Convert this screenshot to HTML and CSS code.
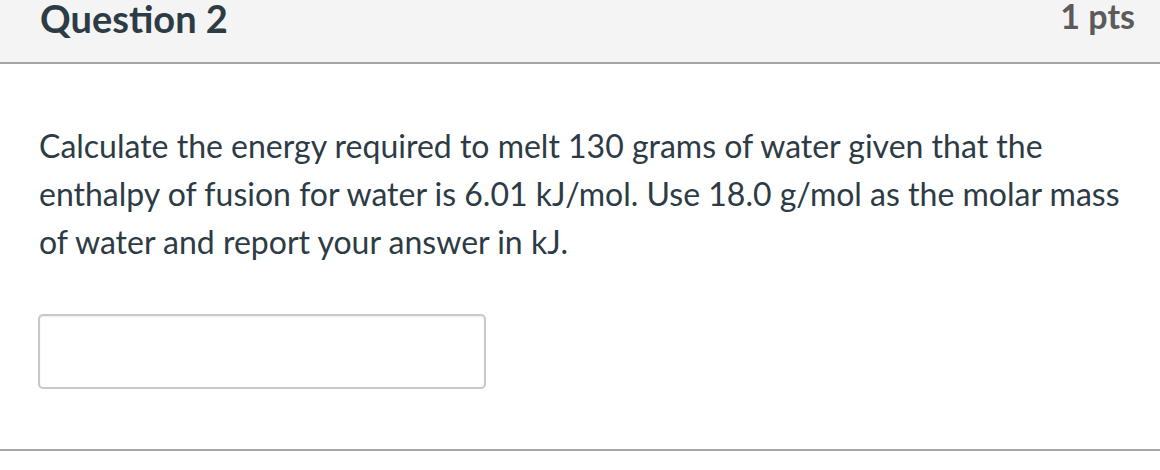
FILE: index.html
```html
<!DOCTYPE html>
<html>
<head>
<meta charset="utf-8">
<link rel="stylesheet" href="styles.css">
</head>
<body>
<div class="question">
  <div class="header">
    <span class="title">Question 2</span>
    <span class="points">1 pts</span>
  </div>
  <div class="content">
    <p class="text">Calculate the energy required to melt 130 grams of water given that the enthalpy of fusion for water is 6.01 kJ/mol. Use 18.0 g/mol as the molar mass of water and report your answer in kJ.</p>
    <input class="answer" type="text">
  </div>
</div>
</body>
</html>
```
FILE: styles.css
```css
html, body {
  margin: 0;
  padding: 0;
  background: #fff;
}
body {
  font-family: Lato, "Liberation Sans", sans-serif;
  color: #2d3b45;
}
.question {
  width: 1160px;
  border-bottom: 2px solid #a5a5a5;
}
.header {
  height: 62px;
  background: #f4f4f4;
  border-bottom: 2px solid #a5a5a5;
  display: flex;
  justify-content: space-between;
  align-items: flex-start;
  padding: 0 25px 0 40px;
  box-sizing: content-box;
}
.title {
  font-weight: 700;
  font-size: 38px;
  line-height: 36px;
}
.points {
  font-weight: 700;
  font-size: 34px;
  line-height: 32px;
  color: #5b5b5b;
}
.content {
  padding: 58px 40px 60px 39px;
}
.text {
  margin: 0;
  font-size: 32px;
  line-height: 48px;
}
.answer {
  display: block;
  margin-top: 48px;
  width: 448px;
  height: 75px;
  box-sizing: border-box;
  border: 2px solid #c9c9c9;
  border-radius: 5px;
  box-shadow: inset 0 1px 2px rgba(0,0,0,0.08);
  background: #fff;
  margin-left: -1px;
}
```
